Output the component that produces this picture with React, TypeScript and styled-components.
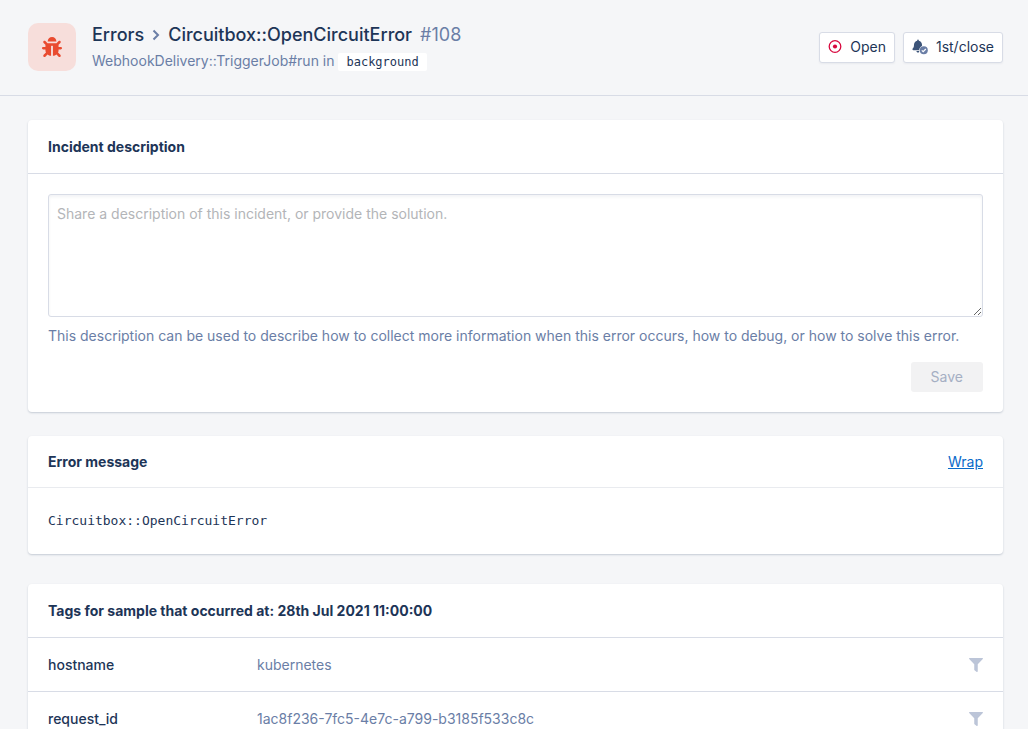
import React from 'react';
import styled, { createGlobalStyle } from 'styled-components';
import { FaBug, FaFilter } from 'react-icons/fa';

const color = {
  page: '#f5f6f8',
  line: '#d8dce6',
  ink: '#1d3557',
  muted: '#6a7ea6',
};

const mono = '"DejaVu Sans Mono", "Liberation Mono", monospace';

const GlobalStyle = createGlobalStyle`
  *, *::before, *::after { box-sizing: border-box; }
  body {
    margin: 0;
    background: ${color.page};
    color: ${color.ink};
    font-family: Inter, "Liberation Sans", sans-serif;
    font-size: 14px;
    line-height: 20px;
  }
  button, textarea { font: inherit; }
`;

const Header = styled.header`
  display: flex;
  align-items: center;
  gap: 16px;
  padding: 21px 25px 22px 28px;
  border-bottom: 1px solid ${color.line};
`;

const BugTile = styled.div`
  display: flex;
  flex: none;
  align-items: center;
  justify-content: center;
  width: 48px;
  height: 48px;
  border-radius: 10px;
  background: #f7dedb;
  color: #e94b30;
`;

const Titles = styled.div`
  flex: 1;
  min-width: 0;
`;

const Title = styled.h1`
  display: flex;
  align-items: center;
  gap: 8px;
  margin: 0;
  font-size: 18px;
  font-weight: 500;
  line-height: 28px;
`;

const IssueNumber = styled.span`
  color: ${color.muted};
  font-weight: 400;
`;

const Subtitle = styled.p`
  margin: 0;
  color: ${color.muted};
  line-height: 24px;
`;

const Namespace = styled.code`
  padding: 2px 8px;
  border-radius: 2px;
  background: #fff;
  color: ${color.ink};
  font-family: ${mono};
  font-size: 12px;
  line-height: 16px;
`;

const Actions = styled.div`
  display: flex;
  gap: 8px;
`;

const ActionButton = styled.button`
  display: flex;
  align-items: center;
  gap: 8px;
  height: 31px;
  padding: 0 8px;
  border: 1px solid ${color.line};
  border-radius: 3px;
  background: #fff;
  color: ${color.ink};
  box-shadow: 0 1px 2px rgba(29, 53, 87, 0.06);
`;

const Main = styled.main`
  display: flex;
  flex-direction: column;
  gap: 24px;
  padding: 24px 25px 24px 28px;
`;

const Card = styled.section<{ $spaced?: boolean }>`
  margin-bottom: ${(p) => (p.$spaced ? 6 : 0)}px;
  border-radius: 4px;
  background: #fff;
  box-shadow: 0 1px 2px rgba(29, 53, 87, 0.22);
`;

const CardHeader = styled.div<{ $light?: boolean }>`
  display: flex;
  align-items: center;
  justify-content: space-between;
  padding: ${(p) => (p.$light ? 16 : 17)}px 20px ${(p) => (p.$light ? 15 : 16)}px;
  border-bottom: 1px solid ${(p) => (p.$light ? '#e9ebef' : color.line)};
`;

const CardTitle = styled.h2`
  margin: 0;
  font-size: 14px;
  font-weight: 700;
  line-height: 20px;
`;

const Form = styled.form`
  display: flex;
  flex-direction: column;
  padding: 20px;
`;

const Description = styled.textarea`
  display: block;
  width: 100%;
  height: 123px;
  padding: 9px 8px;
  border: 1px solid ${color.line};
  border-radius: 3px;
  background: #fff;
  color: ${color.ink};
  box-shadow: inset 0 2px 3px rgba(29, 53, 87, 0.06);
  resize: vertical;
  &::placeholder { color: #b3b5b8; }
`;

const Hint = styled.p`
  margin: 9px 0 16px;
  color: ${color.muted};
`;

const SaveButton = styled.button`
  align-self: flex-end;
  height: 30px;
  padding: 0 20px;
  border: 0;
  border-radius: 3px;
  background: #f2f2f3;
  color: #a5afc3;
`;

const WrapLink = styled.a`
  color: #0a6ac9;
  text-decoration: underline;
`;

const Message = styled.pre`
  margin: 0;
  padding: 23px 20px;
  overflow-x: auto;
  font-family: ${mono};
  font-size: 13px;
  line-height: 20px;
`;

const TagTable = styled.table`
  width: 100%;
  border-collapse: collapse;
  tr + tr { border-top: 1px solid ${color.line}; }
  th, td {
    height: 53px;
    padding: 2px 0 0;
    text-align: left;
    font-weight: 400;
  }
  th {
    width: 229px;
    padding-left: 20px;
    font-weight: 500;
  }
  td { color: ${color.muted}; }
  td:last-child {
    width: 60px;
    padding-right: 20px;
  }
`;

const FilterButton = styled.button`
  display: block;
  margin-left: auto;
  padding: 0;
  border: 0;
  background: none;
  color: #bcc5d8;
  svg { display: block; }
`;

const Chevron = () => (
  <svg width="8" height="12" viewBox="0 0 8 12" fill="none" stroke={color.muted} strokeWidth="2" aria-hidden="true">
    <path d="M1.5 1.5 6 6 1.5 10.5" />
  </svg>
);

const OpenIcon = () => (
  <svg width="14" height="14" viewBox="0 0 14 14" aria-hidden="true">
    <circle cx="7" cy="6.5" r="5.8" fill="none" stroke="#d8083e" strokeWidth="1.3" />
    <circle cx="7" cy="6.5" r="2.1" fill="#d8083e" />
  </svg>
);

const BellCheckIcon = () => (
  <svg width="16" height="16" viewBox="0 0 16 16" aria-hidden="true">
    <path
      fill="#3c5479"
      d="M6 .5c.5 0 .8.3.8.8v.4C8.800 2.200 10 3.800 10 5.800c0 2.200.6 3 1.300 3.800.6.700.2 1.700-.7 1.700H1.400c-.9 0-1.300-1-.7-1.700C1.400 8.800 2 8 2 5.800c0-2 1.200-3.600 3.200-4.100v-.4c0-.5.300-.8.8-.8zM4.400 12h3.200c0 .9-.7 1.500-1.600 1.500s-1.600-.6-1.600-1.500z"
    />
    <circle cx="11.800" cy="11.200" r="4.600" fill="#fff" />
    <circle cx="11.800" cy="11.200" r="4" fill="#6a7ea6" />
    <path d="m9.800 11.300 1.400 1.400 2.600-2.700" fill="none" stroke="#fff" strokeWidth="1.200" />
  </svg>
);

const tags = [
  { name: 'hostname', value: 'kubernetes' },
  { name: 'request_id', value: '1ac8f236-7fc5-4e7c-a799-b3185f533c8c' },
];

export default function App() {
  return (
    <>
      <GlobalStyle />
      <Header>
        <BugTile>
          <FaBug size={20} aria-hidden="true" />
        </BugTile>
        <Titles>
          <Title>
            <span>Errors</span>
            <Chevron />
            <span>Circuitbox::OpenCircuitError</span>
            <IssueNumber>#108</IssueNumber>
          </Title>
          <Subtitle>
            WebhookDelivery::TriggerJob#run in <Namespace>background</Namespace>
          </Subtitle>
        </Titles>
        <Actions>
          <ActionButton type="button">
            <OpenIcon />
            Open
          </ActionButton>
          <ActionButton type="button">
            <BellCheckIcon />
            1st/close
          </ActionButton>
        </Actions>
      </Header>
      <Main>
        <Card>
          <CardHeader>
            <CardTitle id="description-title">Incident description</CardTitle>
          </CardHeader>
          <Form>
            <Description
              aria-labelledby="description-title"
              aria-describedby="description-hint"
              placeholder="Share a description of this incident, or provide the solution."
            />
            <Hint id="description-hint">
              This description can be used to describe how to collect more information when this error occurs, how to
              debug, or how to solve this error.
            </Hint>
            <SaveButton type="submit" disabled>
              Save
            </SaveButton>
          </Form>
        </Card>
        <Card $spaced>
          <CardHeader $light>
            <CardTitle>Error message</CardTitle>
            <WrapLink href="#wrap">Wrap</WrapLink>
          </CardHeader>
          <Message>Circuitbox::OpenCircuitError</Message>
        </Card>
        <Card>
          <CardHeader>
            <CardTitle>Tags for sample that occurred at: 28th Jul 2021 11:00:00</CardTitle>
          </CardHeader>
          <TagTable>
            <tbody>
              {tags.map((tag) => (
                <tr key={tag.name}>
                  <th scope="row">{tag.name}</th>
                  <td>{tag.value}</td>
                  <td>
                    <FilterButton type="button" aria-label={`Filter by ${tag.name}`}>
                      <FaFilter size={14} />
                    </FilterButton>
                  </td>
                </tr>
              ))}
            </tbody>
          </TagTable>
        </Card>
      </Main>
    </>
  );
}
